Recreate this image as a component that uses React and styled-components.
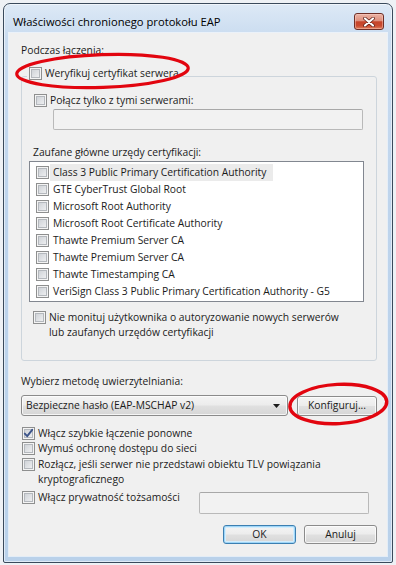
import React from 'react';
import styled, { createGlobalStyle } from 'styled-components';

const GlobalStyle = createGlobalStyle`
  html, body { margin: 0; padding: 0; }
  body {
    width: 396px;
    height: 565px;
    overflow: hidden;
    background: #eef1f5;
    font-family: "Open Sans", "Noto Sans", sans-serif;
    font-size: 10.3px;
    color: #1b1b1b;
  }
  * { box-sizing: border-box; }
`;

const Page = styled.div`
  position: relative;
  width: 396px;
  height: 565px;
  padding: 3px 0 0 3px;
`;

const Window = styled.div`
  width: 390px;
  height: 560px;
  border: 1px solid #3a4a5c;
  border-radius: 7px 7px 2px 2px;
  background: linear-gradient(180deg, #dde9f6 0px, #cadcf0 32px, #bed4ec 200px, #b9d1ea 100%);
  box-shadow: inset 0 0 0 1px rgba(255, 255, 255, 0.55);
  display: flex;
  flex-direction: column;
  padding: 0 5px 6px 5px;
`;

const TitleBar = styled.div`
  height: 29px;
  flex: none;
  display: flex;
  align-items: flex-start;
  justify-content: space-between;
  padding: 9px 3px 0 4px;
`;

const Title = styled.div`
  margin-top: 1px;
  font-size: 11.2px;
  line-height: 15px;
  color: #000;
`;

const CloseButton = styled.div`
  width: 30px;
  height: 17px;
  border: 1px solid #6e2f27;
  border-radius: 3px;
  background: linear-gradient(180deg, #ebb3a5 0%, #de907e 45%, #c6442a 52%, #c94b30 78%, #e0805f 100%);
  box-shadow: inset 0 0 0 1px rgba(255, 210, 200, 0.45);
  display: flex;
  align-items: center;
  justify-content: center;
`;

const Client = styled.div`
  flex: 1;
  background: #f0f0f0;
  box-shadow: 0 0 0 1px rgba(255, 255, 255, 0.6);
  padding: 10px 10px 0 12px;
  display: flex;
  flex-direction: column;
  align-items: flex-start;
`;

const TextLabel = styled.div`
  line-height: 15px;
  white-space: nowrap;
  margin: ${p => p.$margin || '0'};
`;

const CheckRow = styled.div`
  display: flex;
  align-items: flex-start;
  line-height: 15px;
  white-space: nowrap;
  margin: ${p => p.$margin || '0'};
`;

const Box = styled.span`
  flex: none;
  width: 13px;
  height: 13px;
  margin: 1px 3px 0 0;
  border: 1px solid #8e8f8f;
  background: linear-gradient(135deg, #c8ccd1 0%, #e3e5e8 60%, #f6f6f6 100%);
  box-shadow: inset 0 0 0 1px #f4f4f4, inset 0 0 0 2px #b4b8bd;
  display: flex;
  align-items: center;
  justify-content: center;
`;

const GroupBox = styled.fieldset`
  width: 356px;
  margin: 8px 0 0 0;
  padding: 0 12px 20px 7px;
  border: 1px solid #cdd5dc;
  border-radius: 3px;
  min-width: 0;
  display: flex;
  flex-direction: column;
  align-items: flex-start;
`;

const Caption = styled.legend`
  margin-left: -2px;
  padding: 0 2px 6px 2px;
`;

const TextInput = styled.div`
  width: ${p => p.$width}px;
  height: ${p => p.$height}px;
  margin: ${p => p.$margin || '0'};
  border: 1px solid #b9b9b9;
  border-top-color: #a8a8a8;
  border-radius: 2px;
  background: #f2f2f2;
  flex: none;
`;

const ListBox = styled.div`
  width: 335px;
  height: 141px;
  margin-top: 1px;
  border: 1px solid #828790;
  background: #fff;
  padding: 2px 0 0 6px;
`;

const ListRow = styled.div`
  display: flex;
  align-items: center;
  height: 17px;
  white-space: nowrap;
  & > ${Box} { margin: 0; }
`;

const ItemText = styled.span`
  margin-left: 1px;
  padding: 0 7px 0 3px;
  line-height: 17px;
  background: ${p => (p.$selected ? '#ebebeb' : 'transparent')};
`;

const ComboRow = styled.div`
  display: flex;
  align-items: center;
  gap: 9px;
  margin-top: 6px;
`;

const buttonFace = `
  background: linear-gradient(180deg, #f4f4f4 0%, #ececec 48%, #e0e0e0 52%, #d6d6d6 100%);
  box-shadow: inset 0 0 0 1px rgba(255, 255, 255, 0.75);
`;

const Combo = styled.div`
  width: 267px;
  height: 21px;
  border: 1px solid #8b8b8b;
  border-radius: 3px;
  ${buttonFace}
  display: flex;
  align-items: center;
  justify-content: space-between;
  padding: 0 7px 0 4px;
  line-height: 15px;
  white-space: nowrap;
`;

const Button = styled.div`
  width: ${p => p.$width}px;
  height: ${p => p.$height}px;
  border: 1px solid ${p => (p.$default ? '#3c7fb1' : '#8b8b8b')};
  border-radius: 3px;
  ${buttonFace}
  ${p => p.$default && 'box-shadow: inset 0 0 0 1px #9fd6f8, inset 0 0 0 2px #d4edfc;'}
  display: flex;
  align-items: center;
  justify-content: center;
  line-height: 15px;
  white-space: nowrap;
`;

const IdentityRow = styled.div`
  display: flex;
  align-items: flex-start;
  justify-content: space-between;
  width: 356px;
  padding-right: 8px;
  margin-top: 3px;
`;

const ButtonRow = styled.div`
  display: flex;
  justify-content: flex-end;
  gap: 8px;
  width: 356px;
  margin-top: 11px;
`;

const Overlay = styled.svg`
  position: absolute;
  left: 0;
  top: 0;
  pointer-events: none;
`;

const Check = ({ checked }) => (
  <Box>
    {checked && (
      <svg width="11" height="11" viewBox="0 0 11 11">
        <path d="M1.8 5.6 L4.2 8.2 L9.2 1.8" fill="none" stroke="#3c5489" strokeWidth="1.9" strokeLinecap="round" strokeLinejoin="round" />
      </svg>
    )}
  </Box>
);

const certs = [
  'Class 3 Public Primary Certification Authority',
  'GTE CyberTrust Global Root',
  'Microsoft Root Authority',
  'Microsoft Root Certificate Authority',
  'Thawte Premium Server CA',
  'Thawte Premium Server CA',
  'Thawte Timestamping CA',
  'VeriSign Class 3 Public Primary Certification Authority - G5',
];

export default function App() {
  return (
    <>
      <GlobalStyle />
      <Page>
        <Window>
          <TitleBar>
            <Title>Właściwości chronionego protokołu EAP</Title>
            <CloseButton>
              <svg width="12" height="10" viewBox="0 0 12 10">
                <path d="M2 1.5 L10 8.5 M10 1.5 L2 8.5" stroke="#5a1a12" strokeWidth="3.6" strokeLinecap="round" />
                <path d="M2 1.5 L10 8.5 M10 1.5 L2 8.5" stroke="#ffffff" strokeWidth="2.2" strokeLinecap="round" />
              </svg>
            </CloseButton>
          </TitleBar>
          <Client>
            <TextLabel>Podczas łączenia:</TextLabel>
            <GroupBox>
              <Caption>
                <CheckRow>
                  <Check />
                  <span>Weryfikuj certyfikat serwera</span>
                </CheckRow>
              </Caption>
              <CheckRow $margin="6px 0 0 5px">
                <Check />
                <span>Połącz tylko z tymi serwerami:</span>
              </CheckRow>
              <TextInput $width={310} $height={21} $margin="1px 0 0 24px" />
              <TextLabel $margin="15px 0 0 4px">Zaufane główne urzędy certyfikacji:</TextLabel>
              <ListBox>
                {certs.map((c, i) => (
                  <ListRow key={i}>
                    <Check />
                    <ItemText $selected={i === 0}>{c}</ItemText>
                  </ListRow>
                ))}
              </ListBox>
              <CheckRow $margin="8px 0 0 4px">
                <Check />
                <span>
                  Nie monituj użytkownika o autoryzowanie nowych serwerów
                  <br />
                  lub zaufanych urzędów certyfikacji
                </span>
              </CheckRow>
            </GroupBox>
            <TextLabel $margin="13px 0 0 0">Wybierz metodę uwierzytelniania:</TextLabel>
            <ComboRow>
              <Combo>
                <span>Bezpieczne hasło (EAP-MSCHAP v2)</span>
                <svg width="7" height="4" viewBox="0 0 7 4">
                  <path d="M0 0 H7 L3.5 4 Z" fill="#1b1b1b" />
                </svg>
              </Combo>
              <Button $width={80} $height={20}>Konfiguruj...</Button>
            </ComboRow>
            <CheckRow $margin="10px 0 0 1px">
              <Check checked />
              <span>Włącz szybkie łączenie ponowne</span>
            </CheckRow>
            <CheckRow $margin="0 0 0 1px">
              <Check />
              <span>Wymuś ochronę dostępu do sieci</span>
            </CheckRow>
            <CheckRow $margin="1px 0 0 1px">
              <Check />
              <span>
                Rozłącz, jeśli serwer nie przedstawi obiektu TLV powiązania
                <br />
                kryptograficznego
              </span>
            </CheckRow>
            <IdentityRow>
              <CheckRow $margin="0 0 0 1px">
                <Check />
                <span>Włącz prywatność tożsamości</span>
              </CheckRow>
              <TextInput $width={170} $height={22} $margin="2px 0 0 0" />
            </IdentityRow>
            <ButtonRow>
              <Button $width={73} $height={19} $default>OK</Button>
              <Button $width={73} $height={19}>Anuluj</Button>
            </ButtonRow>
          </Client>
        </Window>
        <Overlay width="396" height="565" viewBox="0 0 396 565">
          <ellipse cx="102.5" cy="71" rx="85.8" ry="16.4" fill="none" stroke="#e2050f" strokeWidth="3.2" transform="rotate(-2 102.5 71)" />
          <ellipse cx="338.3" cy="404" rx="48.5" ry="19.6" fill="none" stroke="#e2050f" strokeWidth="3.4" transform="rotate(-3 338.3 404)" />
        </Overlay>
      </Page>
    </>
  );
}
